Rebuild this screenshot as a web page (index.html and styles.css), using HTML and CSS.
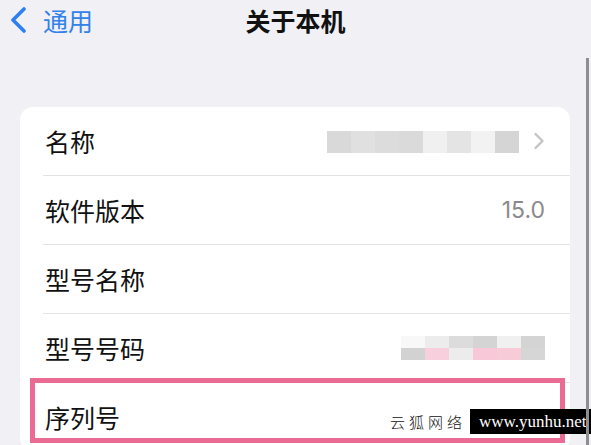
FILE: index.html
```html
<!DOCTYPE html>
<html lang="zh-CN">
<head>
<meta charset="utf-8">
<title>关于本机</title>
<link rel="stylesheet" href="styles.css">
</head>
<body>
<div class="screen">
  <header class="nav">
    <a class="back">
      <svg class="back-icon" width="18" height="26" viewBox="0 0 18 26"><path d="M15 2 L4 13 L15 24" fill="none" stroke="#2f7ff0" stroke-width="3.6" stroke-linecap="round" stroke-linejoin="round"/></svg>
      <span>通用</span>
    </a>
    <h1 class="title">关于本机</h1>
    <div></div>
  </header>

  <section class="card">
    <div class="row">
      <span class="label">名称</span>
      <span class="value">
        <span class="mosaic m-name">
          <i style="background:#d9d9d9"></i><i style="background:#e0e0e0"></i><i style="background:#dcdcdc"></i><i style="background:#dadada"></i><i style="background:#f0f0f0"></i><i style="background:#e4e4e4"></i><i style="background:#f2f2f2"></i><i style="background:#d5d5d5"></i>
        </span>
        <svg class="chev" width="12" height="18" viewBox="0 0 12 18"><path d="M2.5 2 L9.5 9 L2.5 16" fill="none" stroke="#c4c4c7" stroke-width="2.4" stroke-linecap="round" stroke-linejoin="round"/></svg>
      </span>
    </div>
    <div class="row">
      <span class="label">软件版本</span>
      <span class="value text">15.0</span>
    </div>
    <div class="row">
      <span class="label">型号名称</span>
      <span class="value"></span>
    </div>
    <div class="row">
      <span class="label">型号号码</span>
      <span class="value">
        <span class="mosaic m-model">
          <i style="background:#f8f8f8"></i><i style="background:#ececec"></i><i style="background:#dcdcdc"></i><i style="background:#d4d4d4"></i><i style="background:#f0f0f0"></i><i style="background:#d4d4d4"></i>
          <i style="background:#d2d2d2"></i><i style="background:#f8cfdc"></i><i style="background:#ececec"></i><i style="background:#f8c8d8"></i><i style="background:#f8cbd9"></i><i style="background:#d6d6d6"></i>
        </span>
      </span>
    </div>
    <div class="row">
      <span class="label">序列号</span>
      <span class="value"></span>
    </div>
  </section>

  <div class="highlight"></div>
  <div class="watermark">
    <span class="wm-cn">云狐网络</span>
    <span class="wm-url">www.yunhu.net</span>
  </div>
  <div class="scrollbar"></div>
</div>
</body>
</html>
```

FILE: styles.css
```css
html, body {
  margin: 0;
  padding: 0;
}
body {
  background: #f0f0f5;
  font-family: "Noto Sans CJK SC", "Noto Sans", sans-serif;
  color: #111;
}
.screen {
  position: relative;
  width: 591px;
  height: 445px;
  overflow: hidden;
}
.nav {
  display: grid;
  grid-template-columns: 1fr auto 1fr;
  align-items: center;
  height: 40px;
}
.back {
  display: flex;
  align-items: center;
  gap: 16px;
  padding-left: 9px;
  color: #3282ea;
  font-size: 25px;
  line-height: 40px;
}
.back-icon {
  display: block;
}
.title {
  margin: 0;
  font-size: 25px;
  font-weight: 700;
  line-height: 40px;
  color: #111;
}
.card {
  margin: 67px 21px 0 20px;
  background: #fff;
  border-radius: 13px;
}
.row {
  display: flex;
  align-items: center;
  justify-content: space-between;
  height: 68px;
  padding: 0 25px;
  position: relative;
}
.row + .row::before {
  content: "";
  position: absolute;
  left: 23px;
  right: 0;
  top: -1px;
  height: 1px;
  background: #e3e3e7;
}
.row + .row {
  margin-top: 1px;
}
.label {
  font-size: 25px;
  line-height: 30px;
}
.value {
  display: flex;
  align-items: center;
  gap: 14px;
}
.value.text {
  font-family: "Inter", "Noto Sans", sans-serif;
  font-size: 23px;
  color: #8a8a8e;
}
.mosaic {
  display: grid;
  filter: blur(0.6px);
}
.mosaic i {
  display: block;
}
.m-name {
  grid-template-columns: repeat(8, 24px);
  grid-template-rows: 22px;
  margin-top: 2px;
}
.m-model {
  grid-template-columns: repeat(6, 24px);
  grid-template-rows: 12px 12px;
}
.chev {
  display: block;
}
.highlight {
  position: absolute;
  left: 30px;
  top: 378px;
  width: 525px;
  height: 55px;
  border: 5px solid #ea6b93;
}
.watermark {
  position: absolute;
  left: 390px;
  top: 409px;
  width: 201px;
  display: flex;
  align-items: center;
  gap: 4px;
  white-space: nowrap;
}
.wm-cn {
  flex: none;
  font-family: "Noto Sans CJK SC", sans-serif;
  font-weight: 300;
  font-size: 15px;
  line-height: 25px;
  letter-spacing: 4px;
  color: #111;
}
.wm-url {
  flex: none;
  display: block;
  width: 112px;
  height: 25px;
  padding-left: 9px;
  background: #000;
  color: #fff;
  font-family: "Liberation Serif", serif;
  font-size: 17px;
  line-height: 25px;
}
.scrollbar {
  position: absolute;
  right: 2px;
  top: 58px;
  bottom: 0;
  width: 3px;
  background: #8e8e90;
}
```
